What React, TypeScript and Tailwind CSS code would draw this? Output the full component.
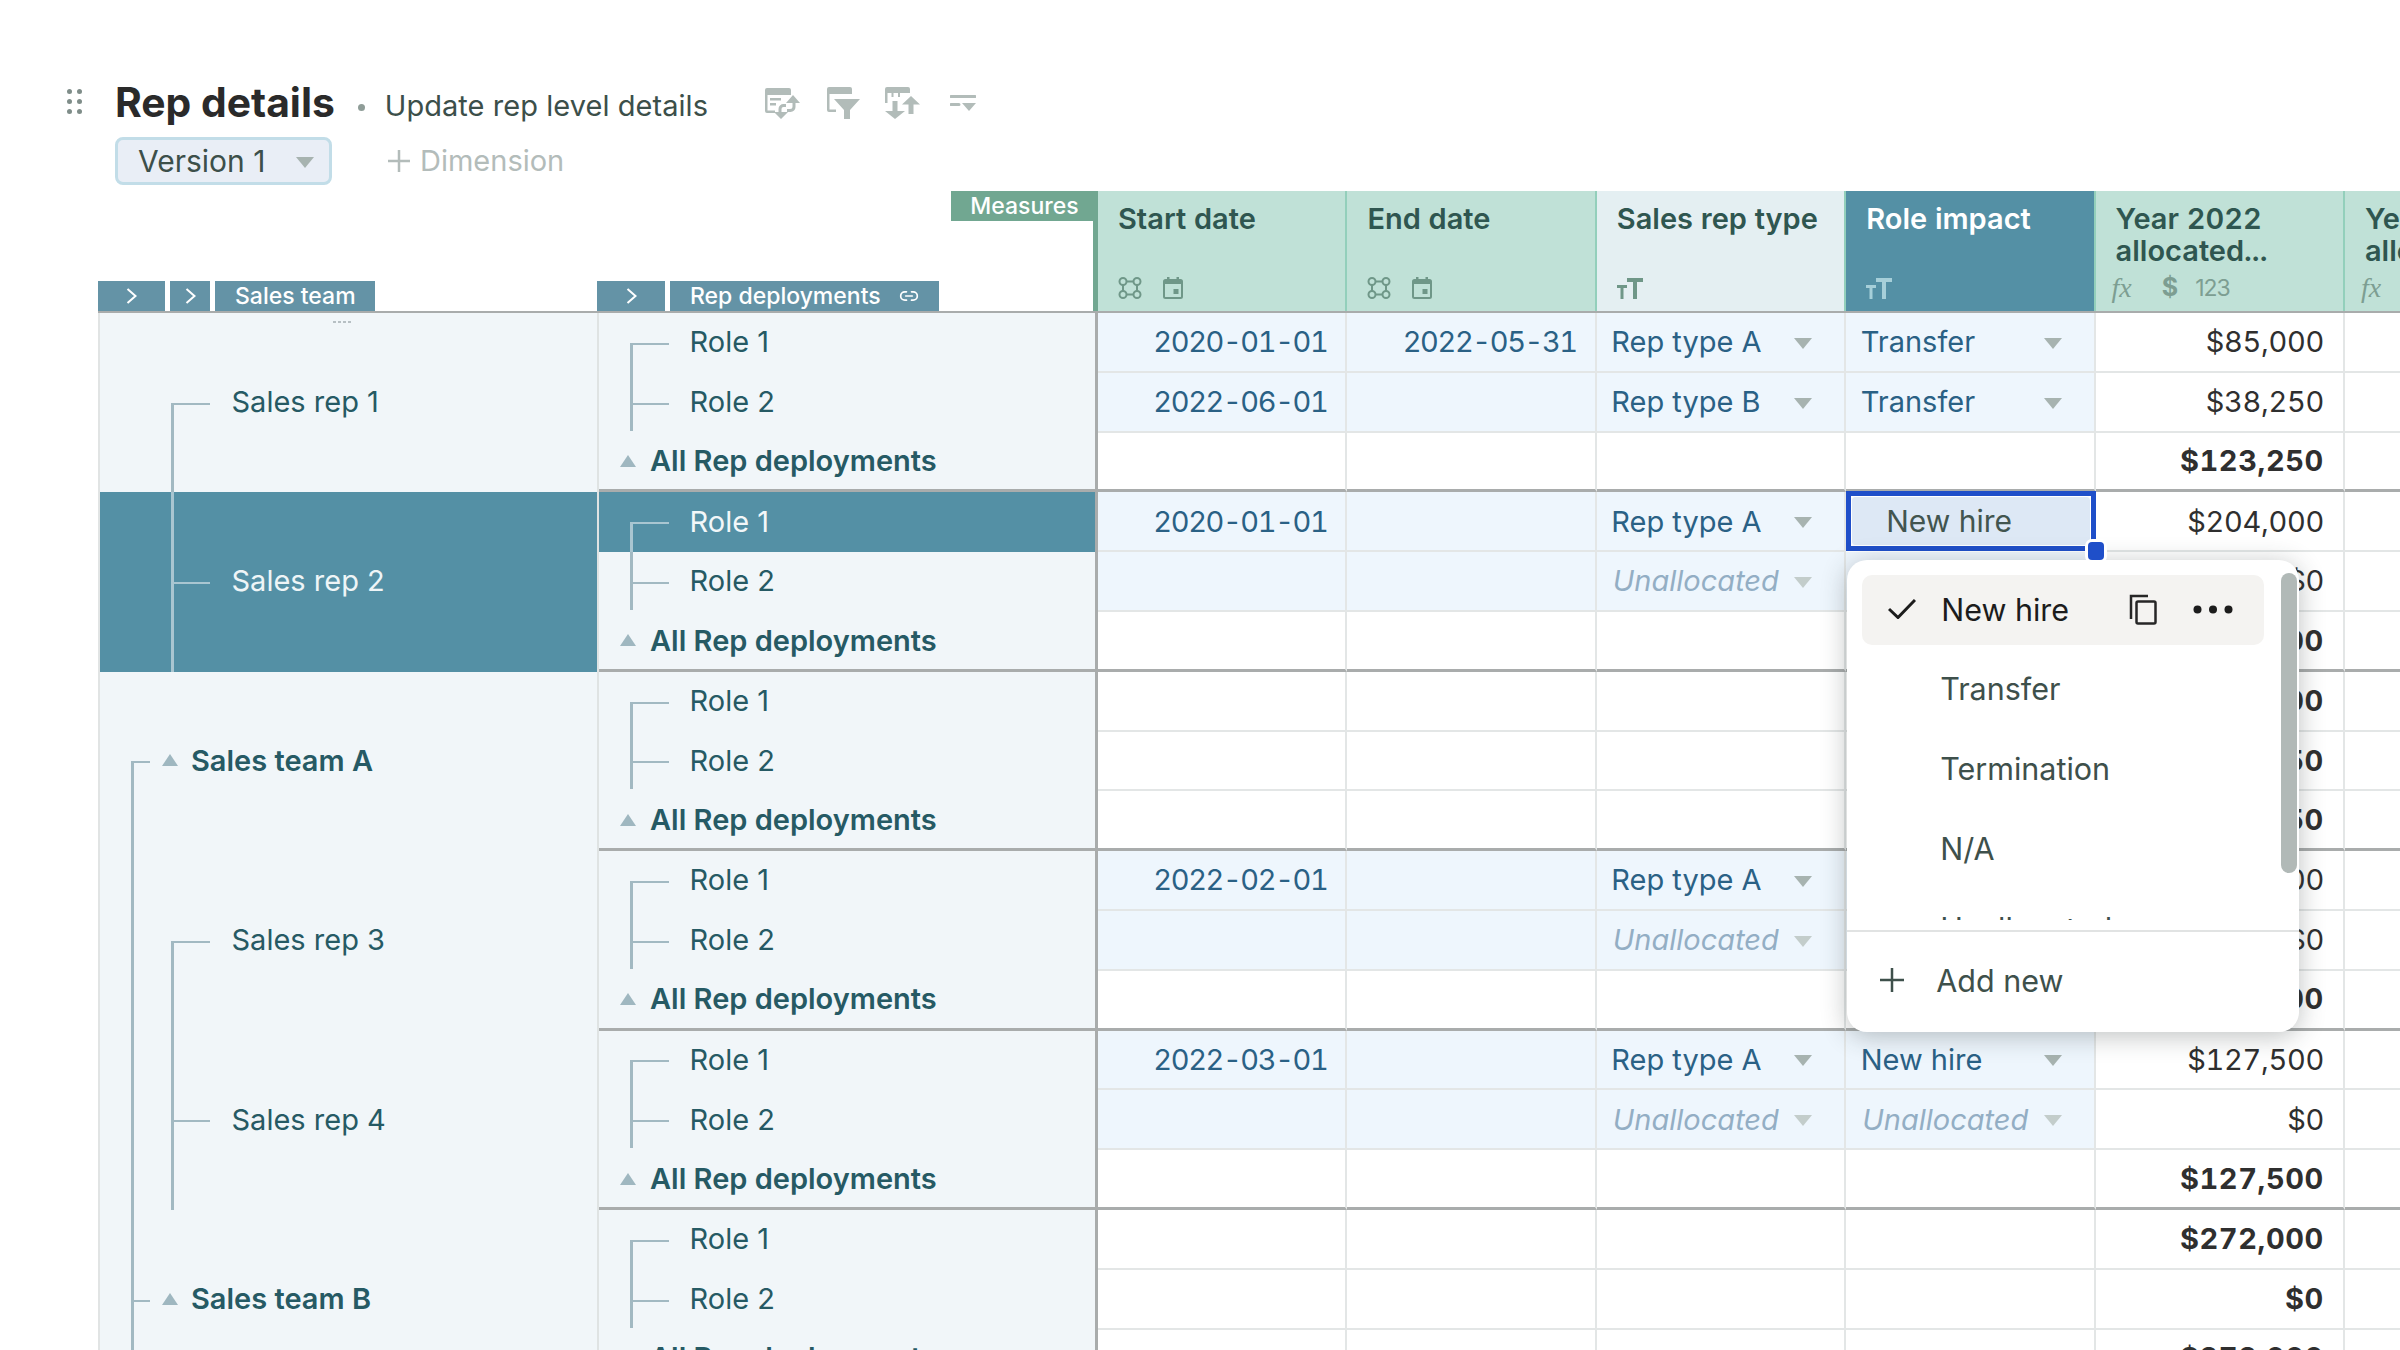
import { Link2 } from "lucide-react";

type RowData = {
  start?: string;
  end?: string;
  type?: string;
  impact?: string;
  value: string;
  bold?: boolean;
  editable?: boolean;
  active?: boolean;
};

const ROWS: RowData[] = [
  { start: "2020-01-01", end: "2022-05-31", type: "Rep type A", impact: "Transfer", value: "$85,000", editable: true },
  { start: "2022-06-01", type: "Rep type B", impact: "Transfer", value: "$38,250", editable: true },
  { value: "$123,250", bold: true },
  { start: "2020-01-01", type: "Rep type A", impact: "New hire", value: "$204,000", editable: true, active: true },
  { type: "Unallocated", impact: "Unallocated", value: "$0", editable: true },
  { value: "$204,000", bold: true },
  { value: "$289,000", bold: true },
  { value: "$38,250", bold: true },
  { value: "$327,250", bold: true },
  { start: "2022-02-01", type: "Rep type A", impact: "New hire", value: "$144,500", editable: true },
  { type: "Unallocated", impact: "Unallocated", value: "$0", editable: true },
  { value: "$144,500", bold: true },
  { start: "2022-03-01", type: "Rep type A", impact: "New hire", value: "$127,500", editable: true },
  { type: "Unallocated", impact: "Unallocated", value: "$0", editable: true },
  { value: "$127,500", bold: true },
  { value: "$272,000", bold: true },
  { value: "$0", bold: true },
  { value: "$272,000", bold: true },
];

function Caret({ className = "fill-[#a7b3b0]" }: { className?: string }) {
  return (
    <svg width="18" height="11" viewBox="0 0 18 11" className={className}>
      <path d="M0 0h18L9 11z" />
    </svg>
  );
}

function UpTriangle() {
  return (
    <svg width="16" height="12" viewBox="0 0 16 12" className="shrink-0 fill-[#9fb7c0]">
      <path d="M8 0l8 12H0z" />
    </svg>
  );
}

function Chevron() {
  return (
    <svg width="11" height="16" viewBox="0 0 11 16" fill="none" stroke="#fff" strokeWidth="2">
      <path d="M1.500 1l8 7-8 7" />
    </svg>
  );
}

function NodesIcon() {
  return (
    <svg width="24" height="22" viewBox="0 0 24 22" fill="none" stroke="#6f9788" strokeWidth="2">
      <circle cx="5" cy="4.500" r="3.500" />
      <circle cx="19" cy="4.500" r="3.500" />
      <circle cx="5" cy="17.500" r="3.500" />
      <circle cx="19" cy="17.500" r="3.500" />
      <path d="M8.500 4.500h7M5 8v6M19 8v6M8.500 17.500h7" />
    </svg>
  );
}

function CalendarIcon() {
  return (
    <svg width="20" height="22" viewBox="0 0 20 22" fill="none">
      <rect x="1" y="3" width="18" height="18" rx="1.500" stroke="#6f9788" strokeWidth="2" />
      <path d="M1 3h18v4H1zM4 0h2.500v3H4zM13.500 0H16v3h-2.500z" fill="#6f9788" />
      <rect x="10.500" y="12" width="5" height="5" fill="#6f9788" />
    </svg>
  );
}

function TextTypeIcon({ color }: { color: string }) {
  return (
    <svg width="26" height="21" viewBox="0 0 26 21" fill={color}>
      <path d="M10 0h16v4H20v17h-4V4h-6zM0 7h10v3H6.500v11h-3V10H0z" />
    </svg>
  );
}

function Fx() {
  return <span className="font-['Liberation_Serif',serif] italic text-[28px] leading-none text-[#7d9e92]">fx</span>;
}

function TableHeader({ title, active, plain, children }: { title: string; active?: boolean; plain?: boolean; children: React.ReactNode }) {
  const bg = active ? "bg-[#5490a5] text-white" : plain ? "bg-[#e4eff2] text-[#2f5650]" : "bg-[#c0e1d7] text-[#2f5650]";
  return (
    <div className={`flex flex-col justify-between h-full pl-[20px] pt-[12px] pb-[12px] border-r-2 border-[#93cfbb] overflow-hidden ${bg}`}>
      <div className="text-[29px] leading-[32px] font-semibold tabular-nums w-[210px]">{title}</div>
      <div className="flex items-center h-[22px]">{children}</div>
    </div>
  );
}

function Toolbar() {
  return (
    <div className="flex items-center ml-[57px]">
      <svg width="35" height="31" viewBox="0 0 35 31" fill="#b2bcb9">
        <path d="M2 0h22a2 2 0 0 1 2 2v5H0V2a2 2 0 0 1 2-2zM0 7h2.500v15.500H10V25H2a2 2 0 0 1-2-2zM5 10h11v2.500H5zM5 15h6v2.500H5z" />
        <path d="M28 7l7 8h-4.500v4a5 5 0 0 1-5 5H22v-3h3a2.500 2.500 0 0 0 2.500-2.500V15H21z" />
        <path d="M16 31l-7-7h4.500v-3a5 5 0 0 1 5-5H21v3h-2.500a2 2 0 0 0-2 2v3H23z" />
      </svg>
      <svg width="33" height="32" viewBox="0 0 33 32" fill="#b2bcb9" className="ml-[27px]">
        <path d="M2 0h21a2 2 0 0 1 2 2v5H0V2a2 2 0 0 1 2-2zM0 7h2.500v15.500H9V25H2a2 2 0 0 1-2-2z" />
        <path d="M7 12h26l-10 11v9h-6v-9z" />
      </svg>
      <svg width="35" height="32" viewBox="0 0 35 32" fill="#b2bcb9" className="ml-[25px]">
        <path d="M2 0h21a2 2 0 0 1 2 2v4H0V2a2 2 0 0 1 2-2zM0 6h2.500v10H0zM6.500 3h2v7h-2zM13 3h2v7h-2z" />
        <path d="M7.500 14h5v10H20l-10 8L0 24h7.500z" />
        <path d="M26 9l9 8.500h-6.500V27h-5v-9.500H17z" />
      </svg>
      <svg width="26" height="16" viewBox="0 0 26 16" fill="#b2bcb9" className="ml-[30px]">
        <path d="M1 0h24a1.500 1.500 0 0 1 0 3H1a1.500 1.500 0 0 1 0-3zM1 8h8a1.500 1.500 0 0 1 0 3H1a1.500 1.500 0 0 1 0-3zM12 8h14l-7 8z" />
      </svg>
    </div>
  );
}

function Menu() {
  return (
    <div className="absolute -left-[4px] top-[64px] z-20 w-[452px] h-[472px] rounded-[20px] bg-white shadow-[0_4px_26px_rgba(40,50,50,0.3)] text-[30.500px] text-[#3e504b]">
      <div className="h-[360px] overflow-hidden pt-[15px] pl-[15px]">
        <div className="flex items-center h-[70px] w-[402px] pb-[2px] rounded-[10px] bg-[#f4f3f1] text-[#1c1c1c]">
          <svg width="28" height="20" viewBox="0 0 28 20" fill="none" stroke="#1c1c1c" strokeWidth="3" className="ml-[26px]">
            <path d="M1 10l9 8.500L27 1" />
          </svg>
          <span className="ml-[25px]">New hire</span>
          <svg width="28" height="31" viewBox="0 0 28 31" fill="none" stroke="#262626" strokeWidth="2.500" className="absolute left-[282px]">
            <path d="M2 25V2h17" />
            <rect x="7.500" y="7.500" width="19" height="22" rx="1.500" />
          </svg>
          <svg width="40" height="9" viewBox="0 0 40 9" fill="#1c1c1c" className="absolute left-[346px]">
            <circle cx="4.500" cy="4.500" r="4" />
            <circle cx="20" cy="4.500" r="4" />
            <circle cx="35.500" cy="4.500" r="4" />
          </svg>
        </div>
        {["Transfer", "Termination", "N/A", "Unallocated"].map((item) => (
          <div key={item} className="flex items-center h-[70px] mt-[10px] pb-[4px] pl-[78px]">
            {item}
          </div>
        ))}
      </div>
      <div className="mt-[10px] border-t-2 border-[#e1e3e3] h-[100px] pb-[2px] flex items-center pl-[33px]">
        <svg width="24" height="24" viewBox="0 0 24 24" stroke="#3e504b" strokeWidth="2.500">
          <path d="M12 0v24M0 12h24" />
        </svg>
        <span className="ml-[32px]">Add new</span>
      </div>
      <div className="absolute right-[2px] top-[13px] w-[16px] h-[300px] rounded-full bg-[#b1b9b7]" />
    </div>
  );
}

function DataRow({ row, index }: { row: RowData; index: number }) {
  const groupEnd = index % 3 === 2;
  const line = groupEnd ? "border-b-[3px] border-b-[#a9acac]" : "border-b-2 border-b-[#e3e6e6]";
  const fill = row.editable ? "bg-[#eef6fd]" : "bg-white";
  const cell = `flex items-center h-full border-r-2 border-r-[#e3e6e6] ${line}`;
  const isUnallocated = (v?: string) => v === "Unallocated";
  const select = (v?: string) => (
    <div className={`${cell} ${fill} justify-between pr-[32px] ${isUnallocated(v) ? "pl-[16px] italic text-[#93aec4]" : "pl-[14.500px] text-[#2a6185]"}`}>
      {v && <span>{v}</span>}
      {v && <Caret className={`mt-[3px] ${isUnallocated(v) ? "fill-[#c3cdcb]" : "fill-[#a7b3b0]"}`} />}
    </div>
  );
  return (
    <div className="grid grid-cols-[249.400px_249.400px_249.400px_249.400px_249.400px_249.400px] h-[59.800px] text-[29px]">
      <div className={`${cell} ${fill} justify-end pr-[18px] tabular-nums tracking-[-1.400px] text-[#2a6185]`}>{row.start}</div>
      <div className={`${cell} ${fill} justify-end pr-[18px] tabular-nums tracking-[-1.400px] text-[#2a6185]`}>{row.end}</div>
      {select(row.type)}
      {row.active ? (
        <div className="relative h-full -mt-[1px] border-[5px] border-[#1f4fc9]">
          <div className="flex items-center h-full rounded-[4px] border border-white bg-[#dde8f5] pl-[34px] text-[30px] text-[#42554f]">New hire</div>
          <div className="absolute -right-[13px] -bottom-[14px] z-30 w-[16px] h-[18px] rounded-[4px] bg-[#1f4fc9] ring-[3px] ring-white" />
          <Menu />
        </div>
      ) : (
        select(row.impact)
      )}
      <div className={`${cell} bg-white justify-end pr-[19px] tabular-nums text-[#2f2f2f] ${row.bold ? "font-bold tracking-[0.600px]" : "tracking-[-0.300px]"}`}>{row.value}</div>
      <div className={`${cell} bg-white`} />
    </div>
  );
}

function SalesCell({ label, selected, team, half, first }: { label: string; selected?: boolean; team?: boolean; half?: boolean; first?: boolean }) {
  const stroke = selected ? "bg-[#a9c6d1]" : "bg-[#a2b9c2]";
  return (
    <div className={`relative flex items-center h-[179.400px] pb-[2px] ${selected ? "bg-[#5490a5] text-[#eef5f7]" : "text-[#265a64]"} ${team ? "pl-[62px] gap-[13px] font-semibold" : "pl-[131.500px]"}`}>
      {team ? (
        <>
          <span className={`absolute left-[31px] w-[3px] bottom-0 bg-[#a2b9c2] ${half ? "top-1/2" : "top-0"}`} />
          <span className="absolute left-[31px] top-1/2 w-[19px] h-[2px] bg-[#a2b9c2]" />
          <UpTriangle />
        </>
      ) : (
        <>
          {!first && <span className="absolute left-[31px] top-0 bottom-0 w-[3px] bg-[#a2b9c2]" />}
          <span className={`absolute left-[71px] w-[3px] bottom-0 ${stroke} ${half ? "top-1/2" : "top-0"}`} />
          <span className={`absolute left-[71px] top-1/2 w-[39px] h-[2px] ${stroke}`} />
        </>
      )}
      {label}
    </div>
  );
}

function RoleGroup({ selected }: { selected?: boolean }) {
  return (
    <div className="h-[179.400px] border-b-[3px] border-[#a9acac] text-[#265a64]">
      <div className={`relative flex items-center h-[59.800px] pl-[90.500px] pb-[2px] ${selected ? "bg-[#5490a5] text-[#f2f7f9]" : ""}`}>
        <span className={`absolute left-[31px] top-1/2 bottom-0 w-[3px] ${selected ? "bg-[#a9c6d1]" : "bg-[#a2b9c2]"}`} />
        <span className={`absolute left-[31px] top-1/2 w-[39px] h-[2px] ${selected ? "bg-[#a9c6d1]" : "bg-[#a2b9c2]"}`} />
        Role 1
      </div>
      <div className="relative flex items-center h-[59.800px] pl-[90.500px] pb-[2px]">
        <span className="absolute left-[31px] top-0 bottom-[2px] w-[3px] bg-[#a2b9c2]" />
        <span className="absolute left-[31px] top-1/2 w-[39px] h-[2px] bg-[#a2b9c2]" />
        Role 2
      </div>
      <div className="flex items-center h-[56.800px] pl-[21px] gap-[14px] font-semibold">
        <UpTriangle />
        All Rep deployments
      </div>
    </div>
  );
}

export default function App() {
  return (
    <div className="w-[2400px] h-[1350px] overflow-hidden bg-white font-['Inter',sans-serif]">
      <div className="flex items-center h-[50px] mt-[78px] pl-[67px]">
        <div className="grid grid-cols-2 gap-x-[5px] gap-y-[5px] w-[15px] -mt-[4px]">
          {[0, 1, 2, 3, 4, 5].map((d) => (
            <span key={d} className="w-[5px] h-[5px] rounded-full bg-[#7f8d89]" />
          ))}
        </div>
        <h1 className="ml-[33px] text-[40.800px] font-bold text-[#2a2a2a]">Rep details</h1>
        <span className="ml-[23px] mt-[8px] w-[7px] h-[7px] rounded-full bg-[#8f9d98]" />
        <span className="ml-[20px] mt-[6px] text-[29px] tracking-[0.050px] text-[#3c4f4a]">Update rep level details</span>
        <Toolbar />
      </div>
      <div className="flex items-center h-[48px] mt-[9px] ml-[115px]">
        <div className="flex items-center w-[217px] h-full pl-[20px] rounded-[8px] border-[3px] border-[#c2dde8] bg-[#e9eef6] text-[30px] text-[#3c4f4a]">
          Version 1
          <Caret className="ml-[31px] mt-[2px] fill-[#a7b3b0]" />
        </div>
        <svg width="22" height="22" viewBox="0 0 22 22" stroke="#b3bcba" strokeWidth="2.500" className="ml-[56px]">
          <path d="M11 0v22M0 11h22" />
        </svg>
        <span className="ml-[10px] text-[29px] text-[#b3bcba]">Dimension</span>
      </div>

      <div className="ml-[98px] mt-[6px]">
        <div className="flex h-[120px] text-white">
          <div className="flex items-end gap-[5px] w-[499px] shrink-0 text-[23px]">
            <div className="flex items-center justify-center w-[67px] h-[30px] bg-[#6493a6]"><Chevron /></div>
            <div className="flex items-center justify-center w-[40px] h-[30px] bg-[#6493a6]"><Chevron /></div>
            <div className="flex items-center w-[160px] h-[30px] pl-[20px] bg-[#6493a6] font-medium">Sales team</div>
          </div>
          <div className="flex flex-col justify-between w-[501px] shrink-0 border-r-[5px] border-[#71a791] text-[23px]">
            <div className="self-end -mr-[5px] flex items-center justify-center w-[147px] h-[30px] bg-[#71a791] font-medium">Measures</div>
            <div className="flex gap-[5px]">
              <div className="flex items-center justify-center w-[68px] h-[30px] bg-[#6493a6]"><Chevron /></div>
              <div className="flex items-center justify-between w-[269px] h-[30px] pl-[20px] pr-[20px] bg-[#6493a6] font-medium">
                Rep deployments
                <Link2 size={20} strokeWidth={2} />
              </div>
            </div>
          </div>
          <div className="grid shrink-0 grid-cols-[249.400px_249.400px_249.400px_249.400px_249.400px_249.400px] h-full">
            <TableHeader title="Start date"><NodesIcon /><span className="ml-[21px]"><CalendarIcon /></span></TableHeader>
            <TableHeader title="End date"><NodesIcon /><span className="ml-[21px]"><CalendarIcon /></span></TableHeader>
            <TableHeader title="Sales rep type" plain><TextTypeIcon color="#6f9788" /></TableHeader>
            <TableHeader title="Role impact" active><TextTypeIcon color="#a6cfd9" /></TableHeader>
            <TableHeader title="Year 2022 allocated...">
              <span className="-ml-[4px]"><Fx /></span>
              <span className="ml-[30px] text-[25px] font-bold text-[#7d9e92]">$</span>
              <span className="ml-[17px] text-[23px] text-[#7d9e92] tracking-[-1px]">123</span>
            </TableHeader>
            <TableHeader title="Year 2023 allocated..."><span className="-ml-[4px]"><Fx /></span></TableHeader>
          </div>
        </div>

        <div className="flex border-t-2 border-[#a9acac] text-[29px]">
          <div className="w-[499px] shrink-0 bg-[#f1f6f9] border-l-2 border-[#e1e4e4] relative">
            <div className="absolute left-[233px] top-[8px] flex gap-[2px]">
              {[0, 1, 2, 3].map((d) => (
                <span key={d} className="w-[3px] h-[2px] bg-[#b7c0c4]" />
              ))}
            </div>
            <SalesCell label="Sales rep 1" half first />
            <SalesCell label="Sales rep 2" selected first />
            <SalesCell label="Sales team A" team half />
            <SalesCell label="Sales rep 3" half />
            <SalesCell label="Sales rep 4" />
            <SalesCell label="Sales team B" team />
          </div>
          <div className="w-[501px] shrink-0 bg-[#f1f6f9] border-l-2 border-r-[3px] border-l-[#dfe3e3] border-r-[#a9acac]">
            <RoleGroup />
            <RoleGroup selected />
            <RoleGroup />
            <RoleGroup />
            <RoleGroup />
            <RoleGroup />
          </div>
          <div className="shrink-0">
            {ROWS.map((row, i) => (
              <DataRow key={i} row={row} index={i} />
            ))}
          </div>
        </div>
      </div>
    </div>
  );
}
